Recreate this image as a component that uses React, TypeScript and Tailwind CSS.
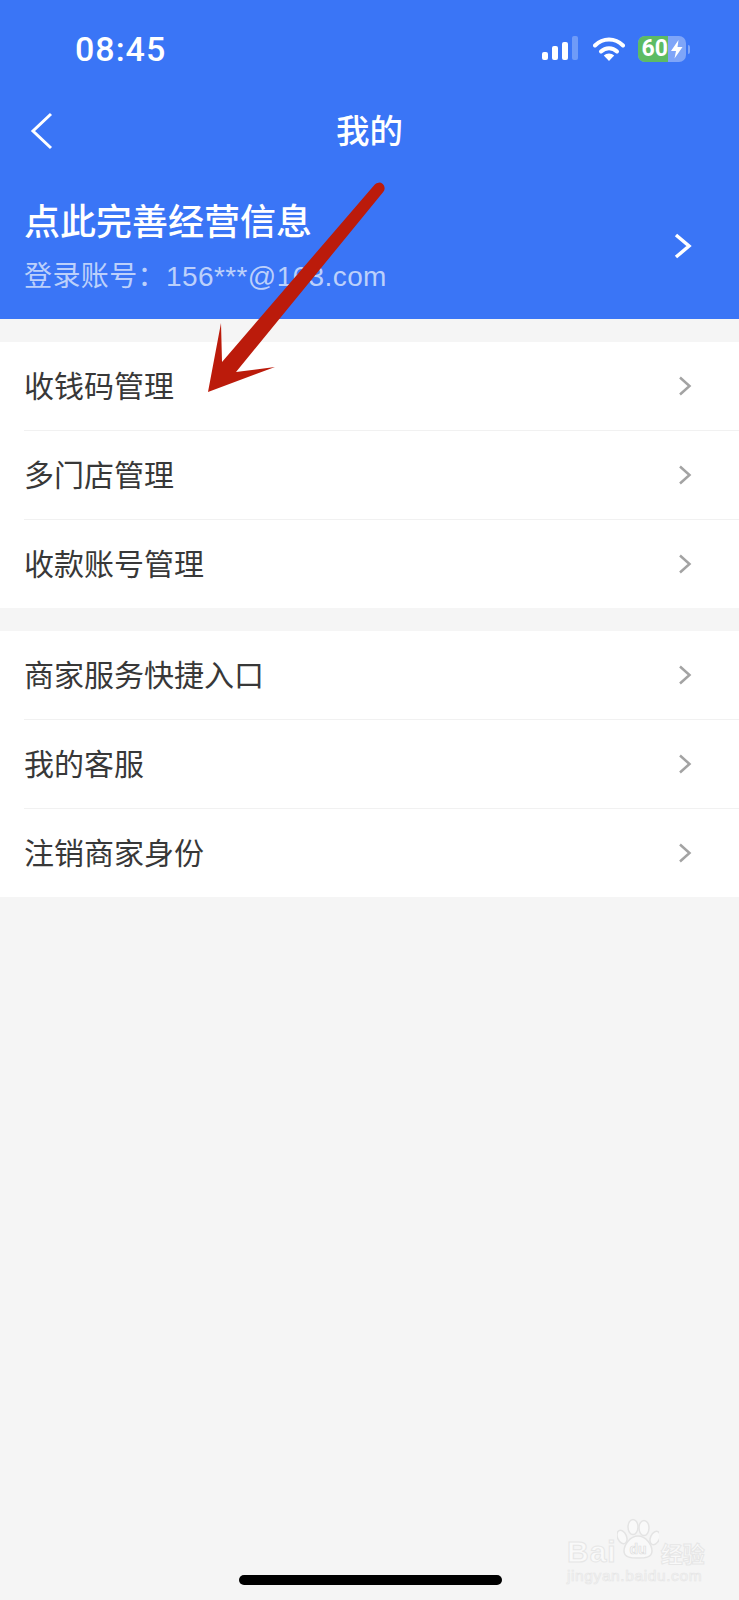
const menuGroups = [
  ["收钱码管理", "多门店管理", "收款账号管理"],
  ["商家服务快捷入口", "我的客服", "注销商家身份"],
];

function StatusIcons() {
  return (
    <div className="flex items-center">
      <svg width="38" height="26" viewBox="0 0 38 26" className="mr-[14px]">
        <rect x="1" y="16" width="6" height="8" rx="2" fill="#fff" />
        <rect x="11" y="10" width="6" height="14" rx="2" fill="#fff" />
        <rect x="21" y="6" width="6" height="18" rx="2" fill="#fff" />
        <rect x="31" y="0" width="6" height="24" rx="2" fill="#6f9bf8" />
      </svg>
      <svg width="32" height="26" viewBox="0 0 32 26" fill="none" className="mr-[13px]">
        <path d="M2 9.5C10 1.5 22 1.5 30 9.5" stroke="#fff" strokeWidth="4" strokeLinecap="round" />
        <path d="M8 15.5C12.5 11 19.5 11 24 15.5" stroke="#fff" strokeWidth="4" strokeLinecap="round" />
        <path d="M16 25L10.8 19.6C13.6 16.9 18.4 16.9 21.2 19.6Z" fill="#fff" />
      </svg>
      <div className="flex h-[26px] w-[48px] rounded-[7px] bg-[#7fa5f8]">
        <div className="flex w-[30px] items-center justify-end rounded-l-[7px] bg-[#5dbb63] font-['Roboto',sans-serif] text-[23px] leading-[26px] font-bold text-white">
          60
        </div>
        <svg width="18" height="26" viewBox="0 0 18 26" className="shrink-0">
          <path d="M10.5 4L3 15H8L6.5 22.5L14.5 11H9.5Z" fill="#fff" />
        </svg>
      </div>
      <div className="ml-[2px] h-[9px] w-[2px] rounded-r-sm bg-[#7fa5f8]" />
    </div>
  );
}

function RowChevron() {
  return (
    <svg width="16" height="20" viewBox="0 0 16 20" fill="none">
      <path d="M3 1.500L12.500 10L3 18.500" stroke="#a3a3a3" strokeWidth="2.500" />
    </svg>
  );
}

function Arrow() {
  return (
    <svg width="739" height="420" viewBox="0 0 739 420" className="pointer-events-none absolute top-0 left-0">
      <path
        d="M374.800 184.500A5.500 5.500 0 0 1 383.200 192L236 372L275 367L208 392L221 323L222 362Z"
        fill="#bb1b0b"
      />
    </svg>
  );
}

function Watermark() {
  return (
    <div className="absolute top-[1518px] left-[567px] w-[136px] font-['Liberation_Sans',sans-serif] text-[#f9f9f9]">
      <div className="flex h-[48px] items-end whitespace-nowrap">
        <span className="text-[30px] leading-[28px] font-bold tracking-[1px] [-webkit-text-stroke:1px_#e6e6e6]">Bai</span>
        <svg width="42" height="42" viewBox="0 0 42 42" className="mb-[6px] shrink-0">
          <g fill="#f9f9f9" stroke="#e4e4e4" strokeWidth="1.500">
            <ellipse cx="5" cy="19" rx="4.500" ry="7" transform="rotate(-25 5 19)" />
            <ellipse cx="16" cy="9" rx="5" ry="7.500" />
            <ellipse cx="27" cy="10" rx="5" ry="7.500" />
            <ellipse cx="38" cy="20" rx="4.500" ry="7" transform="rotate(25 38 20)" />
            <path d="M21 18C29 18 35 27 35 33C35 40 27 40 21 40C15 40 7 40 7 33C7 27 13 18 21 18Z" />
          </g>
          <text x="21" y="36" textAnchor="middle" fontSize="14" fontWeight="700" fill="#f9f9f9" stroke="#dedede" strokeWidth="0.700">
            du
          </text>
        </svg>
        <span className="ml-[2px] font-['Noto_Sans_CJK_SC',sans-serif] text-[22px] leading-[28px] font-bold [-webkit-text-stroke:1px_#e6e6e6]">
          经验
        </span>
      </div>
      <div className="mt-[2px] text-[15.500px] leading-[16px] tracking-[0.6px] whitespace-nowrap [-webkit-text-stroke:0.700px_#e6e6e6]">
        jingyan.baidu.com
      </div>
    </div>
  );
}

export default function App() {
  return (
    <div className="relative h-[1600px] w-full overflow-hidden bg-[#f5f5f5] font-['Noto_Sans_CJK_SC',sans-serif]">
      {/* HEADER */}
      <header className="h-[319px] bg-[#3a75f6] text-white">
        <div className="flex h-[98px] items-center justify-between pr-[49px] pl-[75px]">
          <span className="font-['Roboto',sans-serif] text-[34px] leading-none font-medium tracking-[1px]">08:45</span>
          <StatusIcons />
        </div>

        <div className="relative flex h-[66px] items-center justify-center">
          <svg width="24" height="38" viewBox="0 0 24 38" fill="none" className="absolute top-[14px] left-[30px]">
            <path d="M21 2L3 19L21 36" stroke="#fff" strokeWidth="3" />
          </svg>
          <h1 className="pb-[4px] text-[33.500px] leading-none font-medium">我的</h1>
        </div>

        <div className="flex items-center justify-between pt-[30px] pr-[46px] pl-6">
          <div>
            <p className="text-[36px] leading-[50px] font-medium">点此完善经营信息</p>
            <p className="mt-[13px] font-['Liberation_Sans','Noto_Sans_CJK_SC',sans-serif] text-[28px] leading-[40px] tracking-[0.4px] text-[#bcd0fb]">
              登录账号：156***@163.com
            </p>
          </div>
          <svg width="20" height="26" viewBox="0 0 20 26" fill="none">
            <path d="M3 2L16 13L3 24" stroke="#fff" strokeWidth="3.500" />
          </svg>
        </div>
      </header>

      {/* MENU */}
      {menuGroups.map((group) => (
        <section key={group[0]} className="mt-[23px] bg-white pl-6">
          {group.map((label, index) => (
            <div
              key={label}
              className={`flex h-[88px] items-center justify-between pr-[46px] ${
                index > 0 ? "box-content border-t border-[#f1f1f1]" : ""
              }`}
            >
              <span className="pb-[5px] text-[30px] leading-none text-[#383838]">{label}</span>
              <RowChevron />
            </div>
          ))}
        </section>
      ))}

      <Arrow />
      <Watermark />

      <div className="absolute bottom-[15px] left-[239px] h-[10px] w-[263px] rounded-full bg-black" />
    </div>
  );
}
